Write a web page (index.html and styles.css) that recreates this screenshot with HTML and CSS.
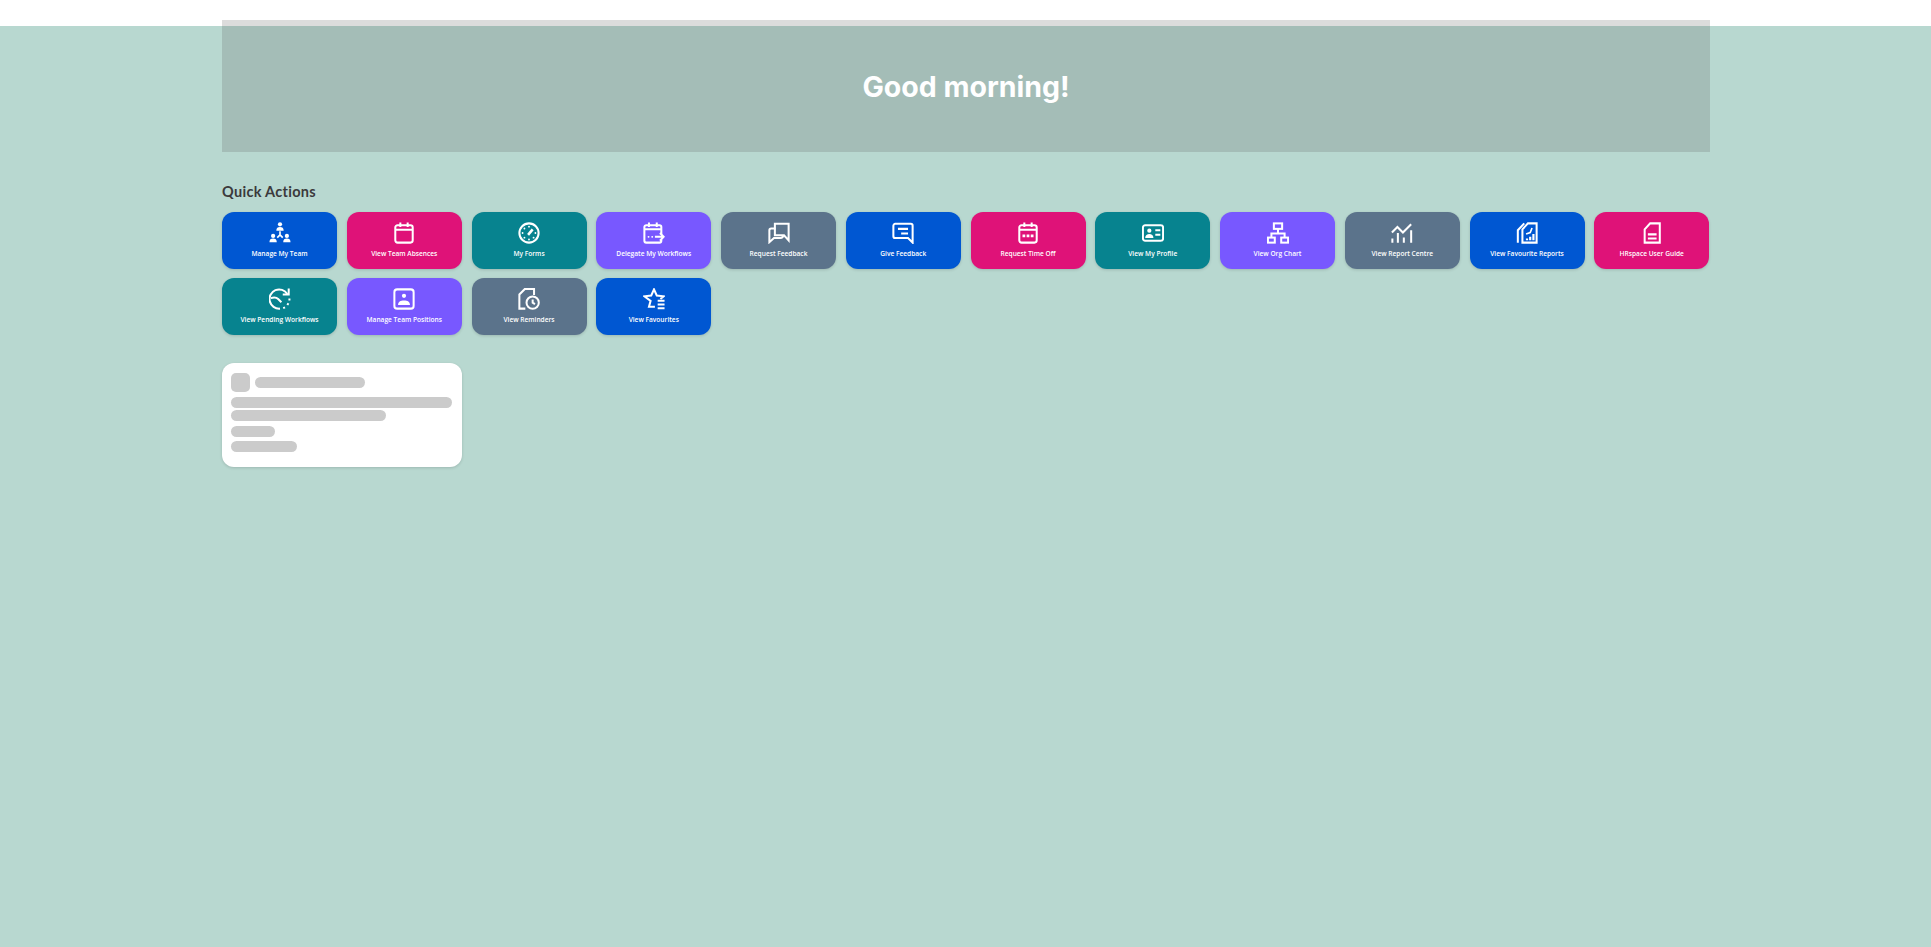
FILE: index.html
```html
<!DOCTYPE html>
<html lang="en">
<head>
  <meta charset="UTF-8" />
  <title>Home</title>
  <link rel="stylesheet" href="styles.css">
</head>
<body>
  <main class="page">

    <!-- greeting banner -->
    <section class="hero">
      <h1>Good morning!</h1>
    </section>

    <!-- quick actions -->
    <h2 class="section-title">Quick Actions</h2>
    <div class="actions">

      <a class="tile blue">
        <svg class="icon" viewBox="0 0 24 24"><circle class="solid" cx="12" cy="2.500" r="2.300"/><path class="solid" d="M8 9.500c0-3 1.500-4 4-4s4 1 4 4zM.5 22c0-3 1.500-4 4-4s4 1 4 4zM15.500 22c0-3 1.500-4 4-4s4 1 4 4z"/><circle class="solid" cx="4.500" cy="15.200" r="2.300"/><circle class="solid" cx="19.500" cy="15.200" r="2.300"/><path d="M12 10v4M12 14l-3 3M12 14l3 3" stroke-width="1.800"/></svg>
        <span>Manage My Team</span>
      </a>
      <a class="tile pink">
        <svg class="icon" viewBox="0 0 24 24"><rect x="2.500" y="3.500" width="19" height="19" rx="2.500"/><path d="M2.500 8.500h19M8 .5v5M16 .5v5"/></svg>
        <span>View Team Absences</span>
      </a>
      <a class="tile teal">
        <svg class="icon" viewBox="0 0 24 24"><circle cx="12" cy="12" r="10.500"/><path d="M11 14l5-6" stroke-width="2.800"/><path class="dots" d="M12 5v.1M7 7v.1M5 12v.1M19 12v.1M7 17v.1M12 19v.1M17 17v.1"/></svg>
        <span>My Forms</span>
      </a>
      <a class="tile purple">
        <svg class="icon" viewBox="0 0 24 24"><path d="M20 13V5.500a2 2 0 0 0-2-2H3.500a2 2 0 0 0-2 2V20.500a2 2 0 0 0 2 2H18a2 2 0 0 0 2-2v-1M1.500 8h18.500M6.500 .5v5M15 .5v5"/><path d="M13 16.200h9M18.500 12l4 4.200-4 4.200"/><path class="dots" d="M6 16.200h.1M10 16.200h.1"/></svg>
        <span>Delegate My Workflows</span>
      </a>
      <a class="tile slate">
        <svg class="icon" viewBox="0 0 24 24"><path d="M8 7H3.500a2 2 0 0 0-2 2v13l5-4.500h7c2 0 3-1 3-3"/><path d="M7.500 2h15v18l-5-5.500H7.500z"/></svg>
        <span>Request Feedback</span>
      </a>
      <a class="tile blue">
        <svg class="icon" viewBox="0 0 24 24"><path d="M3.500 2h17a2 2 0 0 1 2 2v18.500l-5-5H3.500a2 2 0 0 1-2-2V4a2 2 0 0 1 2-2z"/><path d="M6.500 7.500h11M10 12.500h7.500"/></svg>
        <span>Give Feedback</span>
      </a>
      <a class="tile pink">
        <svg class="icon" viewBox="0 0 24 24"><rect x="2.500" y="3.500" width="19" height="19" rx="2.500"/><path d="M2.500 8.500h19M8 .5v5M16 .5v5"/><path d="M6 15h12" stroke-width="3" stroke-dasharray="3 1.500"/></svg>
        <span>Request Time Off</span>
      </a>
      <a class="tile teal">
        <svg class="icon" viewBox="0 0 24 24"><rect x="1" y="3.500" width="22" height="17" rx="2.500"/><circle class="solid" cx="8" cy="9.500" r="2.300"/><path class="solid" d="M3.500 17.500c0-3 2-4.500 4.500-4.500s4.500 1.500 4.500 4.500z"/><path d="M14.500 9h5.500M14.500 14h5.500"/></svg>
        <span>View My Profile</span>
      </a>
      <a class="tile purple">
        <svg class="icon" viewBox="0 0 24 24"><rect x="7.500" y="1.500" width="9" height="6"/><rect x="1" y="17" width="7.500" height="5.500"/><rect x="15.500" y="17" width="7.500" height="5.500"/><path d="M12 7.500v5M4.800 17v-4.500h14.400V17"/></svg>
        <span>View Org Chart</span>
      </a>
      <a class="tile slate">
        <svg class="icon" viewBox="0 0 24 24"><path d="M1 11.500l6-6 6 6 9-9"/><path d="M1.500 18v4.500M7.500 12v10.500M14 17v5.500M22 9v13.500"/></svg>
        <span>View Report Centre</span>
      </a>
      <a class="tile blue">
        <svg class="icon" viewBox="0 0 24 24"><path d="M13 1.500h9.500v21H7V8z"/><path d="M9 1.500L2 9v13.500"/><path d="M11 13l4.500-1.500 2-5" stroke-width="1.800"/><path d="M12 20v-2M15.500 20v-4M19 20v-7" stroke-width="2.400"/></svg>
        <span>View Favourite Reports</span>
      </a>
      <a class="tile pink">
        <svg class="icon" viewBox="0 0 24 24"><path d="M10 1.500h10.500v21H4V8z"/><path d="M7.500 13.500h9.500M7.500 18h9.500" stroke-width="2.400"/></svg>
        <span>HRspace User Guide</span>
      </a>

      <a class="tile teal">
        <svg class="icon" viewBox="0 0 24 24"><path d="M20 6.500A10.500 10.500 0 1 0 12 22.500"/><path d="M21.500 .5v6.500h-6.500"/><path d="M2 11c3-1 6-1 8 1l3.500 3.500"/><path d="M15.500 22l2-.8M20 18.500l1.200-1.800M22.300 13.500v-2"/></svg>
        <span>View Pending Workflows</span>
      </a>
      <a class="tile purple">
        <svg class="icon" viewBox="0 0 24 24"><rect x="1.500" y="1.500" width="21" height="21" rx="3"/><circle class="solid" cx="12" cy="8.500" r="2.300"/><path class="solid" d="M5.500 18.500c0-3.500 2.500-5 6.500-5s6.500 1.500 6.500 5z"/></svg>
        <span>Manage Team Positions</span>
      </a>
      <a class="tile slate">
        <svg class="icon" viewBox="0 0 24 24"><path d="M8 22.500H1.500V7l6-6h10v6.500"/><circle cx="16" cy="16" r="6.700"/><path d="M16 12.500V16l2.500 1.500"/></svg>
        <span>View Reminders</span>
      </a>
      <a class="tile blue">
        <svg class="icon" viewBox="0 0 24 24"><path d="M13 20.500H6.500l1.800-6.500L1.500 9l7.500-.8L12 1.500l3 6.700 7.500.8-3.500 3"/><path d="M16 14h7.500M16 18h7.500M16 22h7.500"/></svg>
        <span>View Favourites</span>
      </a>
    </div>

    <!-- card still loading -->
    <div class="card">
      <div class="card-head">
        <div class="bone bone-square"></div>
        <div class="bone bone-title"></div>
      </div>
      <div class="bone bone-long"></div>
      <div class="bone bone-mid"></div>
      <div class="bone bone-short"></div>
      <div class="bone bone-small"></div>
    </div>

  </main>
</body>
</html>
```

FILE: styles.css
```css
body {
  margin: 0;
  min-height: 100vh;
  background: linear-gradient(#fff 26px, #b8d8d0 26px);
  font-family: "Lato", sans-serif;
}
.page {
  width: 1488px;
  margin-left: 222px;
  padding-top: 20px;
}

/* banner */
.hero {
  height: 132px;
  background: rgba(90, 90, 90, 0.21);
  display: flex;
  align-items: center;
  justify-content: center;
}
.hero h1 {
  margin: 0;
  color: #fff;
  font-family: "Inter", sans-serif;
  font-size: 28.500px;
  font-weight: 700;
}

.section-title {
  margin: 30px 0 0;
  height: 30px;
  line-height: 19px;
  color: #3b3a3c;
  font-size: 14.500px;
  font-weight: 700;
  letter-spacing: 0.3px;
}

/* tiles */
.actions {
  display: grid;
  grid-template-columns: repeat(12, 115px);
  grid-auto-rows: 57px;
  column-gap: 9.750px;
  row-gap: 9px;
}
.tile {
  display: flex;
  flex-direction: column;
  align-items: center;
  padding-top: 10px;
  box-sizing: border-box;
  border-radius: 12px;
  box-shadow: 0 1px 3px rgba(0, 0, 0, 0.15);
  color: #fff;
  font-family: "Open Sans", sans-serif;
  font-size: 6.600px;
  font-weight: 600;
}
.tile span {
  margin-top: 5px;
  line-height: 10px;
}
.icon {
  width: 22px;
  height: 22px;
  fill: none;
  stroke: #fff;
  stroke-width: 2.200;
}
.icon .solid {
  fill: #fff;
  stroke: none;
}
.icon .dots {
  stroke-width: 2;
  stroke-linecap: round;
}
.blue { background: #0057d2; }
.pink { background: #df1278; }
.teal { background: #07838f; }
.purple { background: #7858ff; }
.slate { background: #5b738b; }

/* skeleton card */
.card {
  width: 240px;
  height: 104px;
  margin-top: 28px;
  padding: 10px 9px;
  box-sizing: border-box;
  background: #fff;
  border-radius: 12px;
  box-shadow: 0 1px 3px rgba(0, 0, 0, 0.15);
}
.card-head {
  display: flex;
  align-items: center;
  gap: 5px;
  margin-bottom: 5px;
}
.bone {
  height: 11px;
  border-radius: 6px;
  background: #cbcbcb;
}
.bone-square {
  width: 19px;
  height: 19px;
  border-radius: 5px;
}
.bone-title { width: 110px; }
.bone-long { width: 221px; margin-bottom: 2px; }
.bone-mid { width: 155px; margin-bottom: 5px; }
.bone-short { width: 44px; margin-bottom: 4px; }
.bone-small { width: 66px; }
```
